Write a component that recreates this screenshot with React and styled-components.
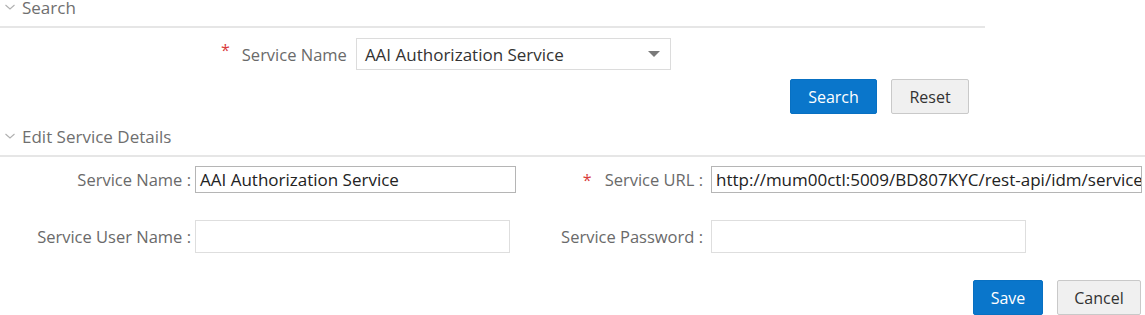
import React from 'react'
import styled, { createGlobalStyle } from 'styled-components'

const Global = createGlobalStyle`
  html, body {
    margin: 0;
    padding: 0;
    background: #fff;
    overflow: hidden;
  }
  body {
    font-family: "Open Sans", "Noto Sans", sans-serif;
    color: #333;
  }
`

const Page = styled.div`
  width: 1145px;
  margin-top: -12px;
`

const Section = styled.section`
  width: ${p => p.$width || '1145px'};
`

const Header = styled.div`
  display: flex;
  align-items: center;
  height: 40px;
  box-sizing: border-box;
  border-bottom: 2px solid #e6e6e6;
  padding-left: 4px;
  font-size: 17px;
  color: #6f6f6f;
  gap: 6px;
  margin-top: ${p => p.$top || '0'};
`

const Chevron = () => (
  <svg width="12" height="8" viewBox="0 0 12 8">
    <path d="M1.5 2 L6 6 L10.5 2" fill="none" stroke="#b0b0b0" strokeWidth="1.1" />
  </svg>
)

const SearchRow = styled.div`
  display: flex;
  align-items: center;
  padding-left: 221px;
  margin-top: 10px;
`

const Star = styled.span`
  color: #d93b3b;
  font-size: 16px;
  align-self: flex-start;
  margin-top: 1px;
  margin-right: ${p => p.$gap || '12px'};
`

const Label = styled.label`
  font-size: 16.5px;
  color: #6a6a6a;
  white-space: nowrap;
  margin-right: ${p => p.$gap || '0'};
`

const Select = styled.div`
  display: flex;
  align-items: center;
  justify-content: space-between;
  box-sizing: border-box;
  width: 315px;
  height: 32px;
  border: 1px solid #dcdcdc;
  padding: 0 10px 0 8px;
  font-size: 17px;
  color: #333;
`

const Caret = styled.span`
  width: 0;
  height: 0;
  border-left: 6px solid transparent;
  border-right: 6px solid transparent;
  border-top: 6px solid #7a7a7a;
`

const ButtonBar = styled.div`
  display: flex;
  justify-content: flex-end;
  gap: 14px;
  padding-right: ${p => p.$right || '16px'};
  margin-top: ${p => p.$top || '9px'};
`

const Button = styled.button`
  box-sizing: border-box;
  height: 35px;
  min-width: ${p => p.$w};
  padding: 0 14px;
  font-family: inherit;
  font-size: 16px;
  border-radius: 2px;
  border: 1px solid ${p => (p.$primary ? '#0870c2' : '#c9c9c9')};
  background: ${p => (p.$primary ? '#0a76cb' : '#f0f0f0')};
  color: ${p => (p.$primary ? '#fff' : '#333')};
`

const Grid = styled.div`
  display: grid;
  grid-template-columns: 195px 325px 191px 434px;
  align-items: center;
  margin-top: 9px;
`

const Field = styled.div`
  display: flex;
  align-items: center;
  justify-content: flex-end;
  padding-right: ${p => p.$pad || '4px'};
  margin-top: ${p => p.$top || '0'};
`

const Input = styled.div`
  box-sizing: border-box;
  width: ${p => p.$w};
  height: ${p => p.$h};
  margin-top: ${p => p.$top || '0'};
  border: 1px solid ${p => (p.$dark ? '#b5b5b5' : '#dedede')};
  padding: 0 4px;
  display: flex;
  align-items: center;
  font-size: 17px;
  color: #222;
  white-space: nowrap;
  overflow: hidden;
`

export default function App() {
  return (
    <Page>
      <Global />
      <Section $width="985px">
        <Header>
          <Chevron />
          Search
        </Header>
        <SearchRow>
          <Star>*</Star>
          <Label $gap="9px">Service Name</Label>
          <Select>
            AAI Authorization Service
            <Caret />
          </Select>
        </SearchRow>
        <ButtonBar>
          <Button $primary $w="87px">Search</Button>
          <Button $w="78px">Reset</Button>
        </ButtonBar>
      </Section>

      <Section>
        <Header $top="3px">
          <Chevron />
          Edit Service Details
        </Header>
        <Grid>
          <Field>
            <Label>Service Name :</Label>
          </Field>
          <Input $w="321px" $h="27px" $dark>AAI Authorization Service</Input>
          <Field $pad="8px">
            <Star $gap="13px">*</Star>
            <Label>Service URL :</Label>
          </Field>
          <Input $w="431px" $h="27px" $dark>http://mum00ctl:5009/BD807KYC/rest-api/idm/services</Input>

          <Field $top="27px">
            <Label>Service User Name :</Label>
          </Field>
          <Input $w="315px" $h="33px" $top="27px" />
          <Field $pad="8px" $top="27px">
            <Label>Service Password :</Label>
          </Field>
          <Input $w="315px" $h="33px" $top="27px" />
        </Grid>
        <ButtonBar $right="4px" $top="27px">
          <Button $primary $w="70px">Save</Button>
          <Button $w="84px">Cancel</Button>
        </ButtonBar>
      </Section>
    </Page>
  )
}
